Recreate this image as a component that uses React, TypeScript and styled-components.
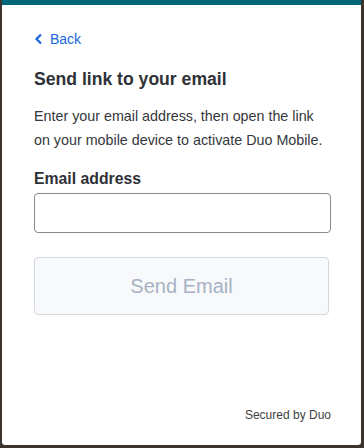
import React from "react";
import styled, { createGlobalStyle } from "styled-components";

const GlobalStyle = createGlobalStyle`
    html, body {
        margin: 0;
        padding: 0;
        background: #3b332d;
        font-family: "Liberation Sans", Arial, sans-serif;
    }
`;

const Frame = styled.div`
    width: 364px;
    height: 448px;
    padding: 0 3px 3px 2px;
    box-sizing: border-box;
    display: flex;
`;

const Card = styled.div`
    flex: 1;
    background: #ffffff;
    border-top: 5px solid #00667a;
    border-radius: 0 0 3px 3px;
    display: flex;
    flex-direction: column;
    padding: 24px 30px 23px 32px;
`;

const BackLink = styled.a`
    display: flex;
    align-items: center;
    gap: 7px;
    color: #1a66dd;
    font-size: 14px;
    text-decoration: none;
    cursor: pointer;
    height: 20px;
`;

const Title = styled.h1`
    margin: 18px 0 0;
    font-size: 17.6px;
    font-weight: bold;
    color: #2e3136;
    line-height: 24px;
`;

const Description = styled.p`
    margin: 13px 0 0;
    font-size: 14.3px;
    line-height: 24px;
    color: #34373c;
    white-space: nowrap;
`;

const Label = styled.label`
    display: block;
    margin-top: 18px;
    font-size: 15.8px;
    font-weight: bold;
    color: #2e3136;
    line-height: 18px;
`;

const Input = styled.input`
    display: block;
    margin-top: 5px;
    height: 40px;
    width: 100%;
    box-sizing: border-box;
    border: 1px solid #8a8a8a;
    border-radius: 4px;
    font-size: 16px;
    padding: 0 10px;
    outline: none;
`;

const SendButton = styled.button`
    margin-top: 24px;
    width: calc(100% - 2px);
    height: 58px;
    background: #f8f9fa;
    border: 1px solid #d3d8df;
    border-radius: 4px;
    font-family: "Liberation Sans", Arial, sans-serif;
    font-size: 20px;
    color: #a6b2c4;
    cursor: not-allowed;
`;

const Footer = styled.div`
    margin-top: auto;
    align-self: flex-end;
    font-size: 12px;
    color: #3c3f44;
`;

const ChevronLeft = () => (
    <svg width="9" height="12" viewBox="0 0 9 12" fill="none">
        <path d="M7 1.5L2.5 6L7 10.5" stroke="#1a66dd" strokeWidth="2.2" />
    </svg>
);

const App = () => (
    <>
        <GlobalStyle />
        <Frame>
            <Card>
                <BackLink>
                    <ChevronLeft />
                    Back
                </BackLink>
                <Title>Send link to your email</Title>
                <Description>
                    Enter your email address, then open the link
                    <br />
                    on your mobile device to activate Duo Mobile.
                </Description>
                <Label htmlFor="email">Email address</Label>
                <Input id="email" type="email" />
                <SendButton disabled>Send Email</SendButton>
                <Footer>Secured by Duo</Footer>
            </Card>
        </Frame>
    </>
);

export default App;
